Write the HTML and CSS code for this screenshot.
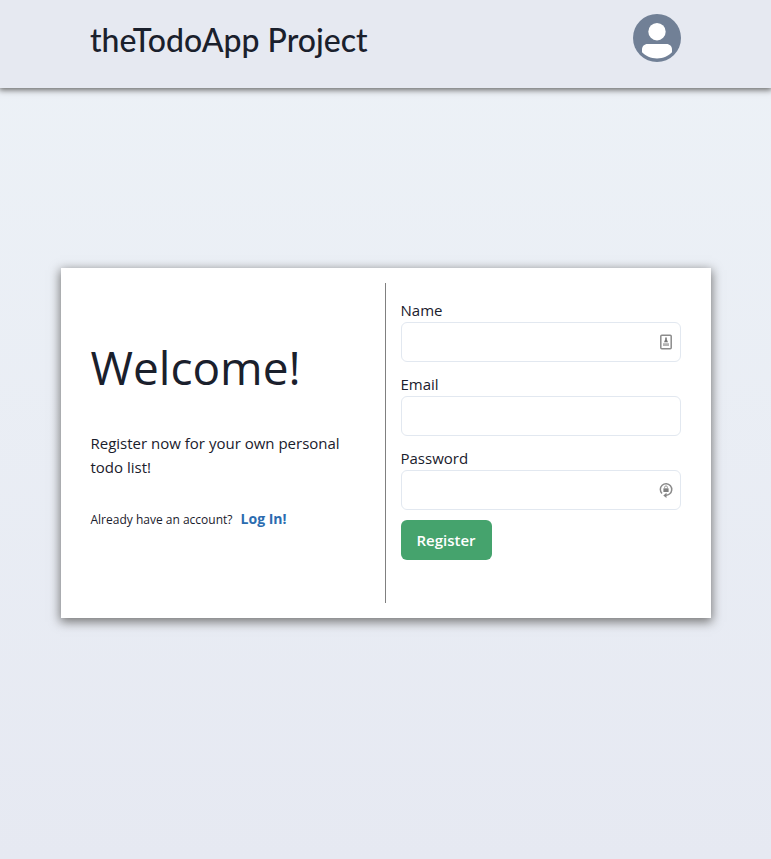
FILE: index.html
```html
<!DOCTYPE html>
<html lang="en">
<head>
<meta charset="utf-8">
<meta name="viewport" content="width=device-width, initial-scale=1">
<title>theTodoApp Project</title>
<link rel="stylesheet" href="styles.css">
</head>
<body>
<header class="header">
  <div class="header-inner">
    <h1 class="brand">theTodoApp Project</h1>
    <button class="avatar" type="button" aria-label="Account">
      <svg viewBox="0 0 48 48" aria-hidden="true">
        <circle cx="24" cy="24" r="24" fill="#718096"/>
        <circle cx="24" cy="17.7" r="8.7" fill="#fff"/>
        <path d="M14.5 30h19c3.100 0 5.500 2.300 5.500 5.300v3C35.500 42 30.300 44.400 24 44.400S12.500 42 9 38.300v-3C9 32.300 11.400 30 14.500 30z" fill="#fff"/>
      </svg>
    </button>
  </div>
</header>
<main class="main">
  <section class="card">
    <div class="intro">
      <h2 class="welcome">Welcome!</h2>
      <p class="lead">Register now for your own personal todo list!</p>
      <p class="login">Already have an account? <a class="login-link" href="#login">Log In!</a></p>
    </div>
    <form class="form">
      <div class="field">
        <label for="name">Name</label>
        <div class="control">
          <input id="name" type="text">
          <svg class="hint" viewBox="0 0 16 16" aria-hidden="true">
            <rect x="2.800" y="1.300" width="10.400" height="13.400" rx="1" fill="none" stroke="#8b8b8b" stroke-width="1.500"/>
            <path d="M7.200 3.500h1.600v2L10 8.200H6l1.200-2.700z" fill="#777"/>
            <path d="M5 9.200h6v2.800H5z" fill="#b4b4b4"/>
          </svg>
        </div>
      </div>
      <div class="field">
        <label for="email">Email</label>
        <div class="control"><input id="email" type="email"></div>
      </div>
      <div class="field">
        <label for="password">Password</label>
        <div class="control">
          <input id="password" type="password">
          <svg class="hint" viewBox="0 0 16 16" aria-hidden="true">
            <path d="M4 11.500A5.700 5.700 0 1 1 11.500 12Q10 13.200 8 13.200" fill="none" stroke="#8b8b8b" stroke-width="1.500"/>
            <path d="M8.500 10.800v5.200L5.300 13.400z" fill="#858585"/>
            <rect x="5.400" y="6.300" width="5.200" height="3.700" fill="#808080"/>
            <path d="M6.600 6.500V5.300a1.400 1.400 0 0 1 2.800 0v1.200" fill="none" stroke="#999" stroke-width="1"/>
          </svg>
        </div>
      </div>
      <button class="submit" type="submit">Register</button>
    </form>
  </section>
</main>
</body>
</html>
```
FILE: styles.css
```css
* {
  box-sizing: border-box;
}

body {
  margin: 0;
  min-height: 100vh;
  font-family: "Open Sans", "Noto Sans", sans-serif;
  font-size: 15px;
  line-height: 24px;
  color: #1a202c;
  background: linear-gradient(#edf2f7, #e6e9f2);
}

.header {
  padding: 14px 90px 22px;
  background: #e6e9f1;
  box-shadow: 0 1px 6px 1px #666;
}

.header-inner {
  display: flex;
  align-items: flex-start;
  justify-content: space-between;
}

.brand {
  margin: 0;
  font-family: Lato, "Open Sans", sans-serif;
  font-size: 32px;
  font-weight: 500;
  line-height: 52px;
}

.avatar {
  width: 48px;
  height: 48px;
  padding: 0;
  border: 0;
  border-radius: 50%;
  background: none;
}

.avatar svg {
  display: block;
}

.main {
  padding: 180px 60px;
}

.card {
  display: grid;
  grid-template-columns: 1fr 1fr;
  max-width: 650px;
  min-height: 350px;
  margin: 0 auto;
  padding: 15px;
  background: #fff;
  box-shadow: 0 3px 10px 1px #777;
}

.intro {
  display: flex;
  flex-direction: column;
  gap: 28px;
  padding: 48px 15px 0;
  border-right: 1px solid #808080;
}

.intro > * {
  margin: 0;
}

.welcome {
  font-size: 46px;
  font-weight: 400;
  line-height: 72px;
}

.login {
  font-size: 12px;
}

.login-link {
  margin-left: 5px;
  font-size: 14px;
  font-weight: 700;
  color: #2b6cb0;
  text-decoration: none;
}

.form {
  display: flex;
  flex-direction: column;
  align-items: flex-start;
  gap: 10px;
  padding: 15px;
}

.field {
  width: 100%;
}

.field label {
  display: block;
}

.control {
  position: relative;
}

.control input {
  display: block;
  width: 100%;
  height: 40px;
  padding: 0 32px 0 16px;
  border: 1px solid #e2e8f0;
  border-radius: 6px;
  background: #fff;
  font: inherit;
  color: inherit;
}

.hint {
  position: absolute;
  top: 12px;
  right: 7px;
  width: 16px;
  height: 16px;
}

.submit {
  height: 40px;
  padding: 0 16px;
  border: 0;
  border-radius: 6px;
  background: #45a36d;
  color: #fff;
  font: inherit;
  font-weight: 600;
}
```
